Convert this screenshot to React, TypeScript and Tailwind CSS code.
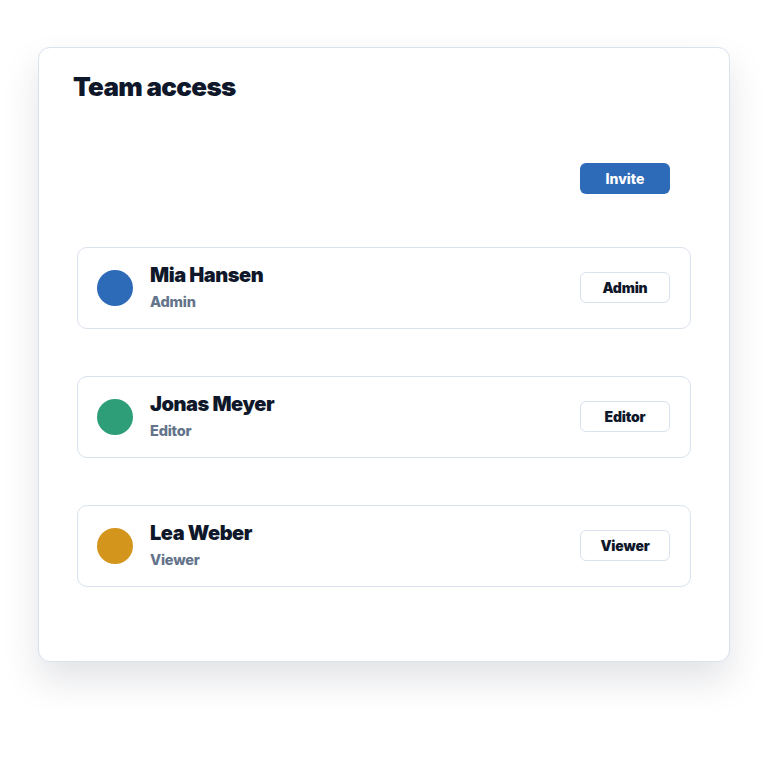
import React from "react";

type Member = { name: string; role: string; color: string };

const members: Member[] = [
  { name: "Mia Hansen", role: "Admin", color: "bg-[#2d6ab7]" },
  { name: "Jonas Meyer", role: "Editor", color: "bg-[#2e9e78]" },
  { name: "Lea Weber", role: "Viewer", color: "bg-[#d4951d]" },
];

export default function App() {
  return (
    <div
      className="w-[768px] h-[768px] bg-white pt-[47px] pl-[38px]"
      style={{ fontFamily: "Inter, 'Noto Sans', sans-serif" }}
    >
      <div className="w-[692px] h-[615px] rounded-[12px] border border-[#d9e2ee] bg-white shadow-[0_18px_36px_rgba(30,41,59,0.13)] flex flex-col">
        <h1 className="pl-[34px] pt-[23px] text-[26px] leading-[32px] font-black tracking-[-0.7px] text-[#0f172a]">
          Team access
        </h1>
        <div className="px-[38px] flex flex-col">
          <div className="flex justify-end pr-[21px] mt-[60px]">
            <button className="w-[90px] h-[31px] rounded-[6px] bg-[#2d6ab7] text-white text-[14px] font-extrabold">
              Invite
            </button>
          </div>
          <div className="flex flex-col gap-[47px] mt-[53px]">
            {members.map((m) => (
              <div
                key={m.name}
                className="h-[82px] rounded-[10px] border-[1.5px] border-[#d9e2ee] flex items-center pl-[19px] pr-[20px]"
              >
                <div className={`w-[36px] h-[36px] rounded-full ${m.color}`} />
                <div className="ml-[17px] flex flex-col flex-1 -mt-[1px]">
                  <div className="text-[20px] leading-[24px] font-black text-[#0f172a] tracking-[-0.45px]">
                    {m.name}
                  </div>
                  <div className="mt-[5px] text-[14.5px] leading-[20px] font-extrabold text-[#64748b] tracking-[-0.2px]">
                    {m.role}
                  </div>
                </div>
                <button className="w-[90px] h-[31px] -mt-[2px] rounded-[6px] border-[1.5px] border-[#d9e2ee] bg-white text-[14px] font-black tracking-[-0.2px] text-[#0f172a]">
                  {m.role}
                </button>
              </div>
            ))}
          </div>
        </div>
      </div>
    </div>
  );
}
